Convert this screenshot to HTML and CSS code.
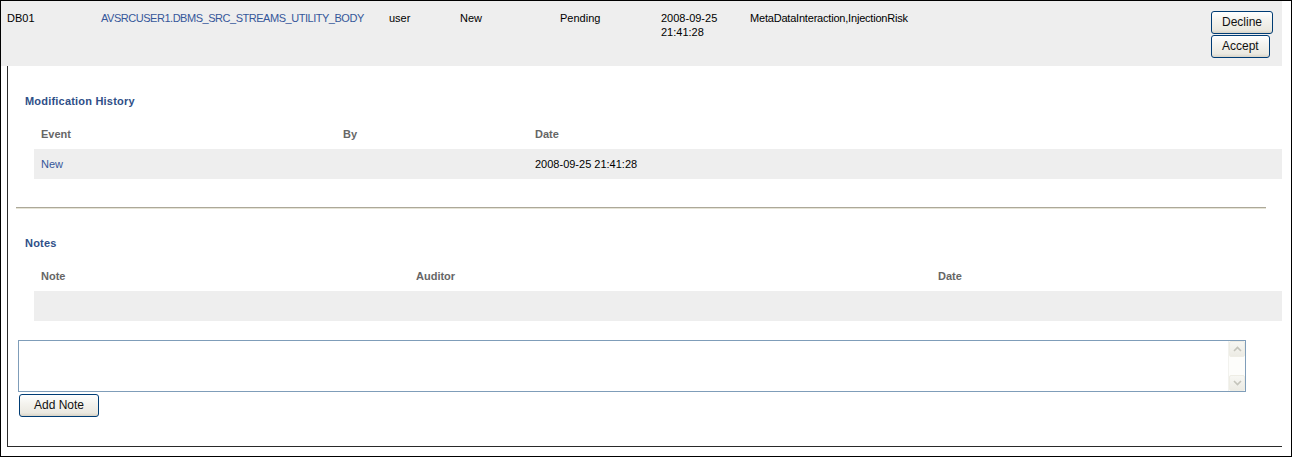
FILE: index.html
```html
<!DOCTYPE html>
<html>
<head>
<meta charset="utf-8">
<title>Audit item</title>
<link rel="stylesheet" href="styles.css">
</head>
<body>
<div class="frame">
  <div class="content">
    <div class="item-row">
      <div class="cell">DB01</div>
      <div class="cell"><a class="link obj-name" href="#">AVSRCUSER1.DBMS_SRC_STREAMS_UTILITY_BODY</a></div>
      <div class="cell">user</div>
      <div class="cell">New</div>
      <div class="cell">Pending</div>
      <div class="cell">2008-09-25<br>21:41:28</div>
      <div class="cell risks">MetaDataInteraction,InjectionRisk</div>
      <div class="actions">
        <button class="btn" type="button">Decline</button>
        <button class="btn" type="button">Accept</button>
      </div>
    </div>

    <div class="detail">
      <h3 class="section-title">Modification History</h3>
      <table class="grid">
        <colgroup><col class="c-event"><col class="c-by"><col></colgroup>
        <thead>
          <tr><th>Event</th><th>By</th><th>Date</th></tr>
        </thead>
        <tbody>
          <tr class="shaded"><td><a class="link" href="#">New</a></td><td></td><td>2008-09-25 21:41:28</td></tr>
        </tbody>
      </table>

      <div class="separator"></div>

      <h3 class="section-title">Notes</h3>
      <table class="grid">
        <colgroup><col class="c-note"><col class="c-auditor"><col></colgroup>
        <thead>
          <tr><th>Note</th><th>Auditor</th><th>Date</th></tr>
        </thead>
        <tbody>
          <tr class="shaded"><td></td><td></td><td></td></tr>
        </tbody>
      </table>

      <div class="notebox">
        <textarea class="note-input" aria-label="Note"></textarea>
        <div class="scrollbar">
          <div class="sb-btn">
            <svg width="9" height="6" viewBox="0 0 9 6"><path d="M1 5 L4.5 1.5 L8 5" fill="none" stroke="#c4c4bb" stroke-width="1.6"/></svg>
          </div>
          <div class="sb-track"></div>
          <div class="sb-btn">
            <svg width="9" height="6" viewBox="0 0 9 6"><path d="M1 1 L4.5 4.5 L8 1" fill="none" stroke="#c4c4bb" stroke-width="1.6"/></svg>
          </div>
        </div>
      </div>
      <button class="btn btn-add" type="button">Add Note</button>
    </div>
  </div>
</div>
</body>
</html>
```

FILE: styles.css
```css
html, body {
  margin: 0;
  padding: 0;
  background: #fff;
}

body {
  font-family: "Liberation Sans", Arial, sans-serif;
  font-size: 11px;
  color: #000;
}

.frame {
  box-sizing: border-box;
  width: 1292px;
  height: 457px;
  border: 1px solid #000;
}

.content {
  width: 1281px;
}

.link {
  color: #35579a;
  text-decoration: none;
}

/* top item row */
.item-row {
  display: grid;
  grid-template-columns: 94px 288px 71px 100px 101px 89px 1fr 63px;
  height: 65px;
  box-sizing: border-box;
  padding: 10px 8px 0 6px;
  background: #eeeeee;
  line-height: 14px;
}

.obj-name {
  letter-spacing: -0.47px;
}

.risks {
  letter-spacing: -0.2px;
}

.actions {
  display: flex;
  flex-direction: column;
  align-items: flex-start;
  gap: 1px;
}

.btn {
  box-sizing: border-box;
  height: 23px;
  padding: 0 10px;
  margin: 0;
  border: 1px solid #003c74;
  border-radius: 3px;
  background: linear-gradient(#ffffff 0%, #f4f3ee 40%, #ebe9e1 85%, #d8d3c6 100%);
  font-family: "Liberation Sans", Arial, sans-serif;
  font-size: 12px;
  color: #111;
  line-height: 21px;
}

/* detail panel */
.detail {
  box-sizing: border-box;
  height: 381px;
  margin-left: 6px;
  padding-top: 28px;
  border-left: 1px solid #2a2a2a;
  border-bottom: 1px solid #2a2a2a;
}

.section-title {
  margin: 0 0 11px 17px;
  font-size: 11px;
  line-height: 14px;
  font-weight: bold;
  letter-spacing: 0.2px;
  color: #2f4f88;
}

.grid {
  width: calc(100% - 26px);
  margin-left: 26px;
  border-collapse: collapse;
  table-layout: fixed;
}

.c-event { width: 302px; }
.c-by { width: 192px; }
.c-note { width: 375px; }
.c-auditor { width: 522px; }

.grid th,
.grid td {
  height: 30px;
  padding: 0 0 0 7px;
  text-align: left;
  vertical-align: middle;
  line-height: 14px;
}

.grid th {
  font-weight: bold;
  color: #666666;
}

.grid .shaded td {
  background: #eeeeee;
}

.separator {
  height: 1px;
  margin: 28px 16px 27px 8px;
  border-top: 1px solid #aca899;
  background: #e6e4d6;
}

.notebox {
  display: flex;
  box-sizing: border-box;
  width: 1228px;
  height: 52px;
  margin: 19px 0 2px 10px;
  border: 1px solid #7f9db9;
  background: #fff;
}

.note-input {
  flex: 1;
  margin: 0;
  padding: 2px;
  border: none;
  outline: none;
  resize: none;
  overflow: hidden;
  font-family: "Liberation Sans", Arial, sans-serif;
  font-size: 11px;
}

.scrollbar {
  display: flex;
  flex-direction: column;
  width: 16px;
  background: #fdfdfb;
  border-left: 1px solid #f2f2ee;
}

.sb-btn {
  display: flex;
  align-items: center;
  justify-content: center;
  box-sizing: border-box;
  height: 16px;
  border: 1px solid #eeede5;
  border-radius: 2px;
  background: linear-gradient(#f7f7f3, #ecebe4);
}

.sb-track {
  flex: 1;
}

.btn-add {
  display: block;
  width: 80px;
  margin-left: 11px;
  padding: 0;
}
```
